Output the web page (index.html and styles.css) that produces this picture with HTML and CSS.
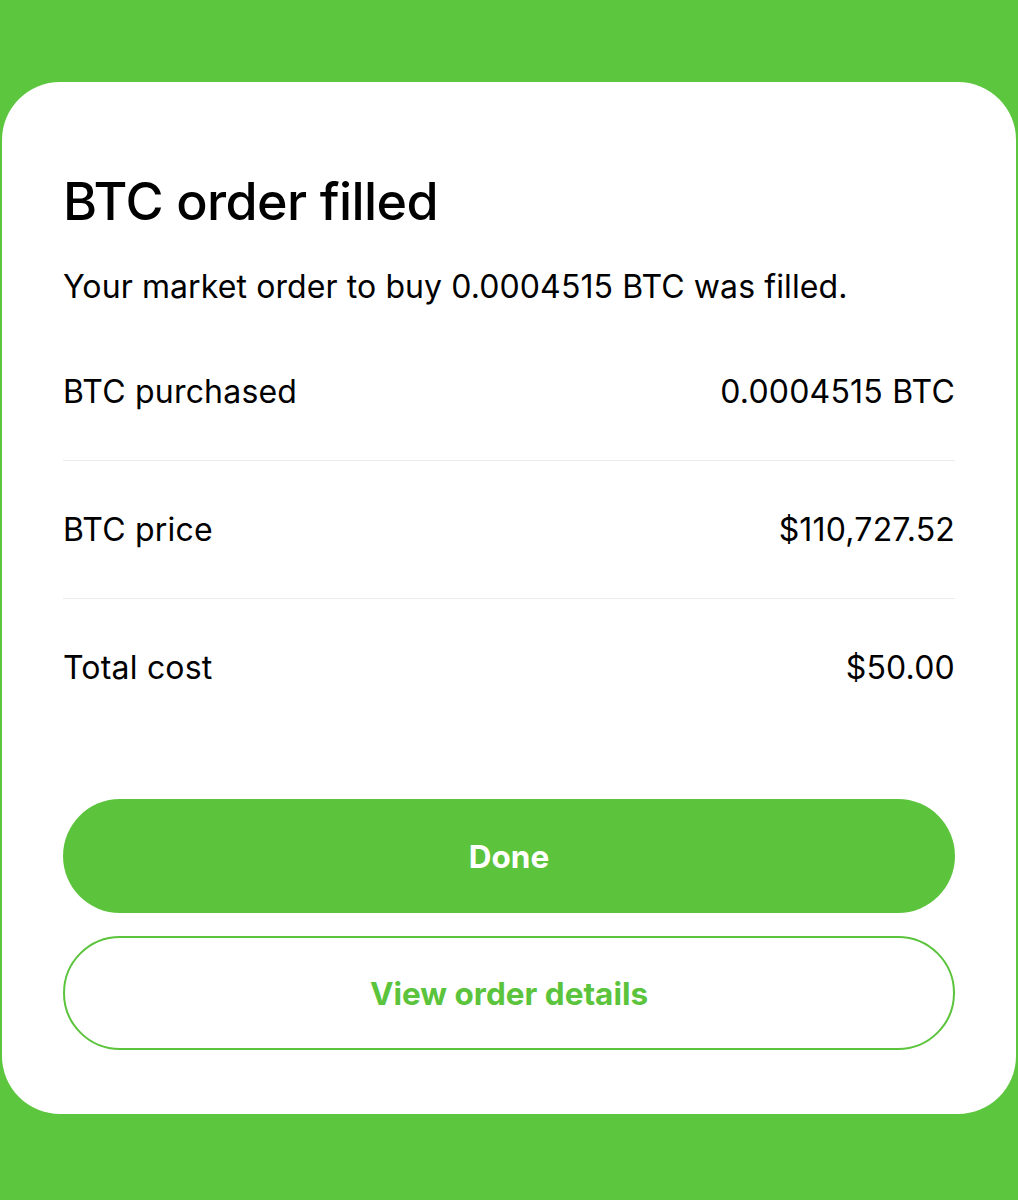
FILE: index.html
```html
<!DOCTYPE html>
<html>
<head>
    <title>BTC order filled</title>
    <link rel="stylesheet" href="styles.css">
</head>
<body>
    <div class="sheet">
        <h1>BTC order filled</h1>
        <p class="summary">Your market order to buy 0.0004515 BTC was filled.</p>
        <div class="details">
            <div class="row">
                <span>BTC purchased</span>
                <span>0.0004515 BTC</span>
            </div>
            <div class="row">
                <span>BTC price</span>
                <span>$110,727.52</span>
            </div>
            <div class="row">
                <span>Total cost</span>
                <span>$50.00</span>
            </div>
        </div>
        <div class="actions">
            <button class="btn btn-primary">Done</button>
            <button class="btn btn-outline">View order details</button>
        </div>
    </div>
</body>
</html>
```

FILE: styles.css
```css
body {
    margin: 0;
    background-color: #5dc63f;
    font-family: Inter, "Noto Sans", sans-serif;
    color: #000;
    height: 1200px;
}
.sheet {
    margin: 82px 2px 0 2px;
    background-color: #fff;
    border-radius: 58px;
    padding: 91px 61px 64px 61px;
}
h1 {
    margin: 0;
    font-size: 52px;
    line-height: 58px;
    font-weight: 500;
    letter-spacing: -0.6px;
}
.summary {
    margin: 36px 0 0 0;
    font-size: 32px;
    line-height: 40px;
    letter-spacing: 0.1px;
}
.details {
    margin-top: 16px;
}
.row {
    display: flex;
    justify-content: space-between;
    align-items: center;
    height: 137px;
    font-size: 32px;
    letter-spacing: 0.2px;
    border-bottom: 1px solid #ebebeb;
}
.row:last-child {
    border-bottom: none;
}
.actions {
    margin-top: 63px;
    display: flex;
    flex-direction: column;
    gap: 23px;
}
.btn {
    height: 114px;
    border-radius: 57px;
    font-family: Inter, "Noto Sans", sans-serif;
    font-size: 31.5px;
    font-weight: 700;
    cursor: pointer;
}
.btn-primary {
    background-color: #5bc43c;
    border: none;
    color: #fff;
}
.btn-outline {
    background-color: #fff;
    border: 2px solid #5bc43c;
    color: #5bc43c;
}
```
